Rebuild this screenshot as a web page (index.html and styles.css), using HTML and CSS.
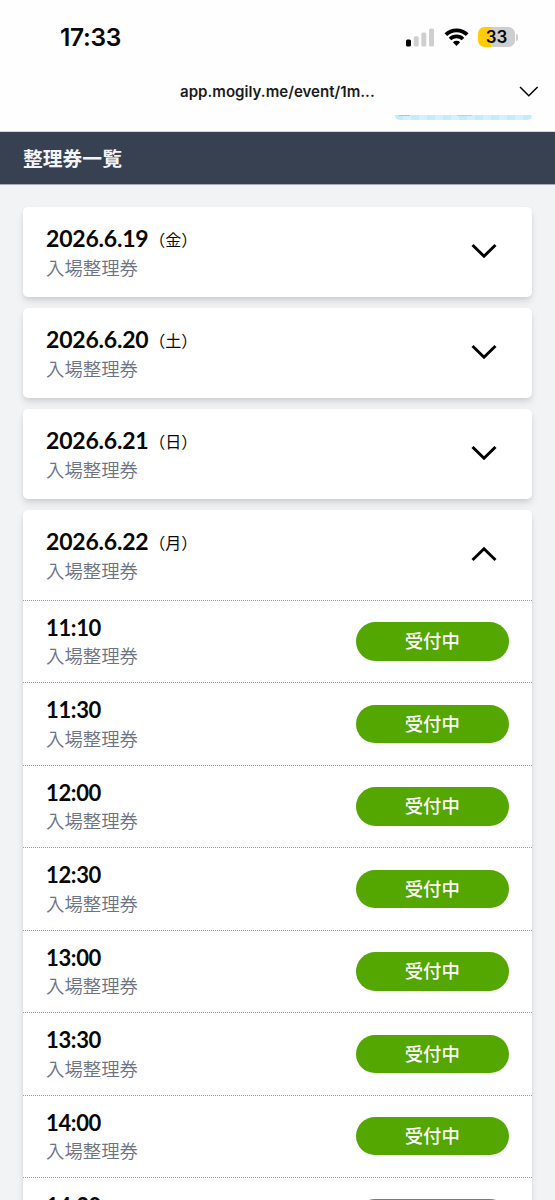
FILE: index.html
```html
<!DOCTYPE html>
<html lang="ja">
<head>
<meta charset="utf-8">
<title>整理券一覧</title>
<link rel="stylesheet" href="styles.css">
</head>
<body>
<header class="phone-bar">
  <div class="status">
    <span class="clock">17:33</span>
    <div class="indicators">
      <svg class="signal" viewBox="0 0 29 19"><rect x="0" y="11.5" width="5" height="7" rx="1.5"/><g class="dim"><rect x="7.7" y="8.3" width="5" height="10.2" rx="1.5"/><rect x="15.3" y="4.5" width="5" height="14" rx="1.5"/><rect x="23" y=".5" width="5" height="18" rx="1.5"/></g></svg>
      <svg class="wifi" viewBox="0 0 25 19"><path d="M1.8 6.7a15.2 15.2 0 0 1 21.4 0M6 11a9.4 9.4 0 0 1 13 0"/><path class="dot" d="M8.9 14.3a5.2 5.2 0 0 1 7.2 0L12.5 18z"/></svg>
      <div class="battery">33</div><i class="cap"></i>
    </div>
  </div>
  <div class="address">
    <span>app.mogily.me/event/1m...</span>
    <svg class="menu-arrow" viewBox="0 0 20 11"><path d="M1 1l8.8 8.8L18.6 1"/></svg>
  </div>
  <div class="banner"></div>
</header>
<h1 class="title">整理券一覧</h1>
<main class="list">
  <section class="card"><div class="head"><div><p class="date">2026.6.19<span>（金）</span></p><p class="kind">入場整理券</p></div><svg class="chevron" viewBox="0 0 26 16"><path d="M1.5 2L13 13.2 24.5 2"/></svg></div></section>
  <section class="card"><div class="head"><div><p class="date">2026.6.20<span>（土）</span></p><p class="kind">入場整理券</p></div><svg class="chevron" viewBox="0 0 26 16"><path d="M1.5 2L13 13.2 24.5 2"/></svg></div></section>
  <section class="card"><div class="head"><div><p class="date">2026.6.21<span>（日）</span></p><p class="kind">入場整理券</p></div><svg class="chevron" viewBox="0 0 26 16"><path d="M1.5 2L13 13.2 24.5 2"/></svg></div></section>
  <section class="card">
    <div class="head"><div><p class="date">2026.6.22<span>（月）</span></p><p class="kind">入場整理券</p></div><svg class="chevron" viewBox="0 0 26 16"><path d="M1.5 14L13 2.8 24.5 14"/></svg></div>
    <div class="slot"><div><p class="time">11:10</p><p class="kind">入場整理券</p></div><span class="button">受付中</span></div>
    <div class="slot"><div><p class="time">11:30</p><p class="kind">入場整理券</p></div><span class="button">受付中</span></div>
    <div class="slot"><div><p class="time">12:00</p><p class="kind">入場整理券</p></div><span class="button">受付中</span></div>
    <div class="slot"><div><p class="time">12:30</p><p class="kind">入場整理券</p></div><span class="button">受付中</span></div>
    <div class="slot"><div><p class="time">13:00</p><p class="kind">入場整理券</p></div><span class="button">受付中</span></div>
    <div class="slot"><div><p class="time">13:30</p><p class="kind">入場整理券</p></div><span class="button">受付中</span></div>
    <div class="slot"><div><p class="time">14:00</p><p class="kind">入場整理券</p></div><span class="button">受付中</span></div>
    <div class="slot"><div><p class="time">14:30</p></div><span class="button"></span></div>
  </section>
</main>
</body>
</html>
```
FILE: styles.css
```css
* { box-sizing: border-box; }
body {
  margin: 0;
  height: 1200px;
  overflow: hidden;
  background: #f1f3f5;
  color: #080808;
  font-family: Lato, "Noto Sans CJK JP", sans-serif;
}
p, h1 { margin: 0; }
svg { display: block; fill: none; stroke: #000; flex: none; }
.phone-bar { height: 132px; background: #fefefe; border-bottom: 1px solid #d4d6d9; }
.status {
  height: 74px;
  padding: 0 38px 0 60px;
  display: flex;
  align-items: center;
  justify-content: space-between;
}
.clock { font: 600 24.5px/28px Inter, sans-serif; letter-spacing: -.3px; }
.indicators { display: flex; align-items: center; }
.signal { width: 29px; height: 19px; fill: #000; stroke: none; }
.signal .dim { fill: #cfcfcf; }
.wifi { width: 25px; height: 19px; margin: 0 9.5px 0 9px; stroke-width: 3.8; }
.wifi .dot { fill: #000; stroke: none; }
.battery {
  width: 37px;
  height: 20px;
  border-radius: 6.5px;
  background: linear-gradient(90deg, #ffcc05 12.5px, #cecece 12.5px);
  font: 600 17px/20px Inter, sans-serif;
  text-align: center;
}
.cap { width: 2px; height: 7px; margin: 0 -1px 0 1px; background: #cecece; border-radius: 0 3px 3px 0; }
.address {
  height: 41px;
  padding: 0 16px 6px 180px;
  display: flex;
  align-items: center;
  justify-content: space-between;
  font: 600 15.1px/20px Inter, sans-serif;
  color: #1b1b1b;
}
.address span { padding-top: 1px; }
.menu-arrow { width: 20px; height: 11px; stroke-width: 1.5; }
.banner {
  width: 137px;
  height: 5px;
  margin-left: 395px;
  border-radius: 0 0 5px 5px;
  background:
    linear-gradient(#b4c3cb, #b4c3cb) 4px 0 / 11px 1px no-repeat,
    linear-gradient(#b9d3e0, #b9d3e0) 62px 0 / 15px 1px no-repeat,
    repeating-linear-gradient(90deg, #c4eafd 0 8px, #d3f0ff 8px 16px);
}
.title {
  height: 53px;
  padding-left: 23px;
  background: #384152;
  border-bottom: 1px solid #a5abb4;
  color: #f3f4f6;
  font-size: 19.8px;
  line-height: 53px;
  font-weight: 700;
}
.list { padding: 22.4px 23px 0; display: grid; gap: 11.5px; }
.card {
  border-radius: 5px;
  background: #fff;
  box-shadow: 0 5px 9px -1px rgba(0,0,0,.11), 0 2px 5px -1px rgba(0,0,0,.09);
}
.head, .slot { padding: 0 23px; display: flex; align-items: center; justify-content: space-between; }
.head { height: 89.5px; padding-top: 2px; }
.head .chevron { width: 26px; height: 16px; margin: 0 12.5px 4px 0; stroke-width: 3; }
.slot { height: 82.45px; border-top: 1.5px dotted #999; }
.slot:last-child { align-items: flex-start; padding-top: 21px; }
.slot:last-child .time { margin-top: -9px; }
.date, .time { font-size: 23px; line-height: 30px; font-weight: 700; letter-spacing: -.2px; }
.time { font-size: 22px; letter-spacing: -.35px; padding-top: 1px; line-height: 29.4px; }
.date { display: flex; align-items: center; line-height: 29px; }
.date span { margin-left: .7px; padding-top: 3px; font-size: 16px; line-height: 20px; font-weight: 400; letter-spacing: 0; }
.kind { color: #6b7385; font-size: 18.4px; line-height: 29px; font-weight: 350; }
.date + .kind { line-height: 30px; }
.button {
  width: 153.5px;
  height: 38.5px;
  border-radius: 20px;
  background: #54a600;
  color: #fff;
  font-size: 18.4px;
  line-height: 38px;
  font-weight: 500;
  text-align: center;
}
```
